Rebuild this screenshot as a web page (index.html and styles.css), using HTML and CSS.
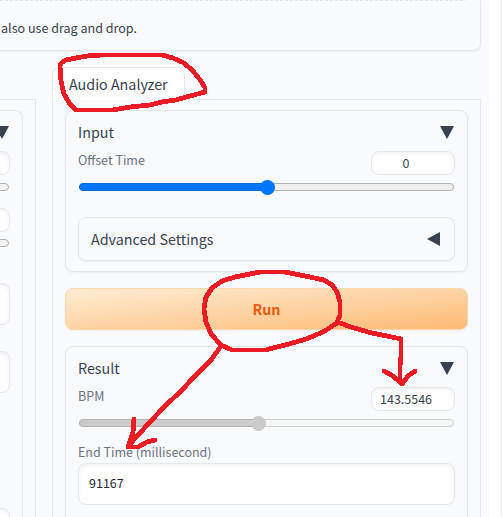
FILE: index.html
```html
<!DOCTYPE html>
<html lang="en">
<head>
<meta charset="utf-8">
<title>Audio Analyzer</title>
<link rel="stylesheet" href="styles.css">
</head>
<body>
<main class="app">
  <section class="upload">
    <div class="drop-edge"></div>
    <p>also use drag and drop.</p>
  </section>
  <div class="columns">
    <section class="side-panel">
      <div class="side-card">
        <div class="head"><svg class="tri" viewBox="0 0 14 13"><path d="M0 0H14L7 13Z"/></svg></div>
        <div class="number"></div>
        <div class="track"></div>
        <div class="number second"></div>
        <div class="track"></div>
        <div class="field first"></div>
        <div class="field next"></div>
        <div class="field last"></div>
      </div>
    </section>
    <section class="analyzer">
      <div class="tabs"><div class="tab">Audio Analyzer</div><div class="tab-line"></div></div>
      <div class="panel">
        <div class="card input-card">
          <div class="head"><span>Input</span><svg class="tri" viewBox="0 0 14 13"><path d="M0 0H14L7 13Z"/></svg></div>
          <div class="row"><span class="label">Offset Time</span><div class="number"><span>0</span></div></div>
          <div class="track"><div class="fill offset"></div></div>
          <div class="advanced"><span>Advanced Settings</span><svg class="tri-left" viewBox="0 0 13 14"><path d="M13 0V14L0 7Z"/></svg></div>
        </div>
        <div class="run">Run</div>
        <div class="card result-card">
          <div class="head"><span>Result</span><svg class="tri" viewBox="0 0 14 13"><path d="M0 0H14L7 13Z"/></svg></div>
          <div class="row"><span class="label">BPM</span><div class="number"><span>143.5546</span></div></div>
          <div class="track disabled"><div class="fill bpm"></div></div>
          <div class="label end-label">End Time (millisecond)</div>
          <div class="field value">91167</div>
        </div>
      </div>
    </section>
  </div>
</main>
<svg class="marks" viewBox="0 0 502 517">
  <path d="M66 60L76 58L87 56L101 55H162L173 58L184 63L193 71L201 81L205 88V92L190 96L176 100L162 102L150 105L130 107L113 110H76L70 104L64 94L61 81L60 66Q61 62 66 60"/>
  <path d="M222 281L235 277L245 275L260 272H285L305 276L324 280L332 285L337 292L340 302V315L337 323L323 332L306 339L289 344L273 348L266 350H232L221 345L211 334L206 322L204 309L206 297L212 288L222 281"/>
  <path d="M221 346L211 360L195 376L181 391L165 406L149 423L130 444M134 419L133 432L128 447H138L147 442L155 440M337 322L354 328L372 333L387 336L401 339V356L400 366V382M384 371L393 376L402 384L408 376L415 371"/>
</svg>
</body>
</html>
```
FILE: styles.css
```css
* { box-sizing: border-box; }
body {
  margin: 0;
  width: 502px;
  height: 517px;
  overflow: hidden;
  position: relative;
  background: #fff;
  border-right: 1px solid #e5e7eb;
  color: #374151;
  font-family: "Noto Sans CJK JP", "Noto Sans", sans-serif;
  font-size: 14.3px;
  line-height: 20px;
}
.app { width: 489px; height: 517px; overflow: hidden; background: #f9fafc; }
.upload {
  width: 481px;
  height: 51px;
  border: solid #e5e7eb;
  border-width: 0 1px 1px 0;
  border-radius: 0 0 8px 0;
  box-shadow: 0 1px 2px rgba(0,0,0,.05);
}
.upload p { margin: 17px 0 0 1px; font-size: 12.55px; }
.drop-edge {
  width: 466px;
  height: 1px;
  background: repeating-linear-gradient(90deg, #e2e4e8 0 3px, #f9fafc 3px 5px);
}
.columns { display: flex; gap: 16px; height: 466px; }
.side-panel {
  width: 36px;
  height: 430px;
  margin-top: 48px;
  border: solid #e5e7eb;
  border-width: 1px 1px 0 0;
  padding-top: 10px;
}
.side-card {
  width: 23px;
  height: 420px;
  border: solid #e5e7eb;
  border-width: 1px 1px 0 0;
  border-radius: 0 8px 0 0;
  padding: 9px 12px 0 0;
  display: flex;
  flex-direction: column;
  align-items: flex-end;
}
.side-card .number.second { margin-top: 17px; }
.side-card .second + .track { margin-top: 7px; }
.side-card .first { margin-top: 36px; }
.side-card .next { margin-top: 26px; }
.side-card .last { margin-top: 115px; }
.side-card .field, .side-card .number { width: 84px; }
.analyzer { width: 429px; margin-top: 16px; }
.tabs { display: flex; align-items: flex-end; height: 33px; }
.tab {
  width: 133px;
  height: 33px;
  border: 1px solid #e5e7eb;
  border-bottom: 0;
  border-radius: 8px 8px 0 0;
  background: #fff;
  padding: 6px 0 0 16px;
  white-space: nowrap;
}
.tab-line { flex: 1; height: 1px; background: #e5e7eb; }
.panel {
  height: 440px;
  border: solid #e5e7eb;
  border-width: 0 1px;
  padding: 10px 12px 0;
}
.card {
  border: 1px solid #e5e7eb;
  border-radius: 8px;
  padding: 9px 12px 0;
  box-shadow: 0 1px 2px rgba(0,0,0,.05);
}
.input-card { height: 162px; }
.result-card { height: 200px; }
.head {
  display: flex;
  flex: none;
  justify-content: space-between;
  align-items: flex-start;
  height: 31px;
  padding: 2px 0 0;
}
.tri { width: 14px; height: 13px; margin: 4px 1px 0 0; fill: #374151; flex: none; }
.row { display: flex; justify-content: space-between; height: 24px; }
.label { color: #6b7280; font-size: 12.5px; line-height: 18px; }
.number {
  width: 84px;
  height: 24px;
  flex: none;
  border: 1px solid #e5e7eb;
  border-radius: 8px;
  background: #fff;
  box-shadow: inset 0 2px 4px rgba(0,0,0,.05);
  padding: 0 22px 0 8px;
  font-size: 12.5px;
  line-height: 21px;
  text-align: center;
}
.number span { display: block; overflow: hidden; }
.track {
  height: 8px;
  width: 375px;
  flex: none;
  margin: 8px 1px 0;
  border: 1px solid #b2b2b2;
  border-radius: 4px;
  background: #efefef;
}
.fill {
  height: 8px;
  margin: -1px 0 0 -1px;
  border-radius: 4px;
  background: #0075ff;
  border: 1px solid #0869da;
  display: flex;
  justify-content: flex-end;
  align-items: center;
}
.fill::after {
  content: "";
  width: 15px;
  height: 15px;
  border-radius: 50%;
  background: #0075ff;
  flex: none;
  margin-right: -8px;
}
.offset { width: 189px; }
.bpm { width: 180px; background: #cbcbcb; border-color: #b2b2b2; }
.bpm::after { background: #cbcbcb; }
.disabled { border-color: #cfd1d0; background: #f5f6f6; }
.advanced {
  display: flex;
  justify-content: space-between;
  align-items: center;
  height: 44px;
  margin-top: 26px;
  border: 1px solid #e5e7eb;
  border-radius: 8px;
  padding: 0 14px 0 12px;
  box-shadow: 0 1px 2px rgba(0,0,0,.05);
}
.tri-left { width: 13px; height: 14px; fill: #374151; }
.run {
  height: 42px;
  margin: 16px 0;
  border: 1px solid #fed7aa;
  border-radius: 8px;
  background: linear-gradient(to bottom right, #ffedd5, #fdba74);
  box-shadow: 0 1px 2px rgba(0,0,0,.05);
  color: #ea580c;
  font-weight: 700;
  line-height: 40px;
  text-align: center;
}
.end-label { margin-top: 16px; height: 20px; }
.field {
  height: 42px;
  flex: none;
  border: 1px solid #e5e7eb;
  border-radius: 8px;
  background: #fff;
  box-shadow: inset 0 2px 4px rgba(0,0,0,.05);
}
.value { padding-left: 10px; font-size: 12.5px; line-height: 38px; color: #1f2937; }
.marks {
  position: absolute;
  left: 0;
  top: 0;
  width: 502px;
  height: 517px;
  fill: none;
  stroke: #ed1c24;
  stroke-width: 4.8;
  stroke-linejoin: round;
  stroke-linecap: round;
  shape-rendering: crispEdges;
}
```
